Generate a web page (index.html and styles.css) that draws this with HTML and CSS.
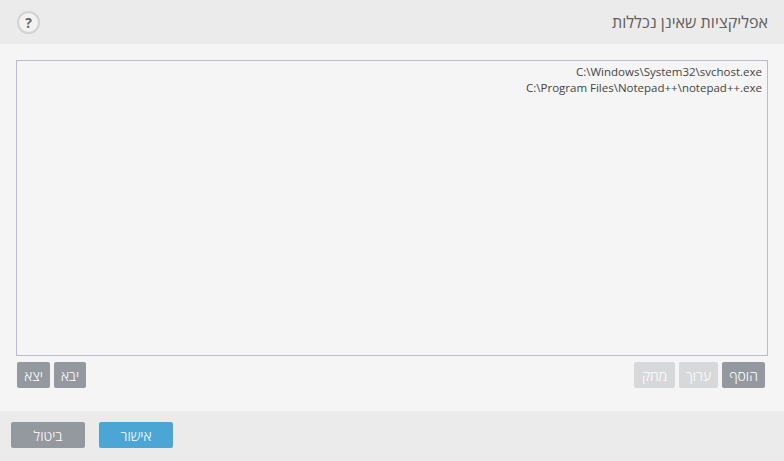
FILE: index.html
```html
<!DOCTYPE html>
<html lang="he" dir="rtl">
<head>
<meta charset="utf-8">
<title>אפליקציות שאינן נכללות</title>
<link rel="stylesheet" href="styles.css">
</head>
<body>
<div class="dialog">
  <header class="header">
    <h1 class="title">אפליקציות שאינן נכללות</h1>
    <span class="help" dir="ltr">?</span>
  </header>
  <main class="content">
    <div class="list" dir="ltr">
      <div class="row">C:\Windows\System32\svchost.exe</div>
      <div class="row">C:\Program Files\Notepad++\notepad++.exe</div>
    </div>
    <div class="toolbar">
      <div class="group group-main">
        <button class="btn btn-add">הוסף</button>
        <button class="btn btn-edit off">ערוך</button>
        <button class="btn btn-del off">מחק</button>
      </div>
      <div class="group group-io">
        <button class="btn btn-import">יבא</button>
        <button class="btn btn-export">יצא</button>
      </div>
    </div>
  </main>
  <footer class="footer">
    <button class="btn wide primary">אישור</button>
    <button class="btn wide">ביטול</button>
  </footer>
</div>
</body>
</html>
```
FILE: styles.css
```css
* { box-sizing: border-box; }
html, body { margin: 0; padding: 0; }
body { width: 784px; height: 461px; overflow: hidden; font-family: "Open Sans", "Liberation Sans", sans-serif; background: #f5f5f5; }
.dialog { display: flex; flex-direction: column; height: 461px; }
.header { height: 44px; flex: none; background: #ebebeb; display: flex; align-items: center; justify-content: space-between; padding: 0 16px 0 17px; }
.title { margin: 0; font-size: 16.1px; font-weight: 400; color: #5f5f5f; }
.help { width: 23px; height: 23px; border: 2px solid #d2d2d2; border-radius: 50%; display: flex; align-items: center; justify-content: center; font-size: 14px; font-weight: 700; color: #666; background: #f2f2f2; }
.content { flex: 1; padding: 16px 16px 0; display: flex; flex-direction: column; }
.list { height: 296px; border: 1px solid #bcb9d3; padding: 3px 5px 0; text-align: right; font-size: 11.5px; line-height: 16px; color: #444; flex: none; }
.toolbar { display: flex; justify-content: space-between; margin-top: 6px; padding: 0 3px 0 1px; }
.group { display: flex; }
.group-main { gap: 4px; }
.group-io { gap: 4px; }
.btn { height: 26px; border: 0; border-radius: 2px; padding: 0; background: #93999f; color: #fff; font-family: inherit; font-size: 14px; font-weight: 300; display: flex; align-items: center; justify-content: center; }
.btn.off { background: #d7d8da; }
.btn-add { width: 43px; }
.btn-edit { width: 39px; }
.btn-del { width: 41px; }
.btn-import { width: 32px; }
.btn-export { width: 33px; }
.footer { height: 50px; flex: none; background: #ebebeb; display: flex; gap: 14px; padding: 11px 11px 0; justify-content: flex-end; }
.wide { width: 74px; }
.primary { background: #4ba6d6; }
```
